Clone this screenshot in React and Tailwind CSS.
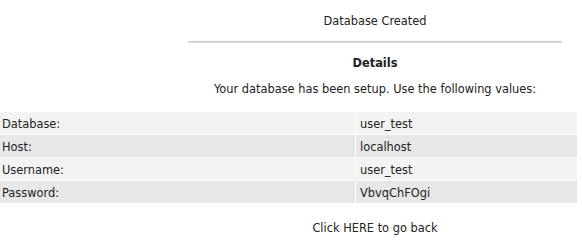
import React from 'react';

const rows = [
    { label: 'Database:', value: 'user_test' },
    { label: 'Host:', value: 'localhost' },
    { label: 'Username:', value: 'user_test' },
    { label: 'Password:', value: 'VbvqChFOgi' },
];

const App = () => {
    return (
        <div className="w-[582px] h-[242px] bg-white text-[11.4px] text-[#222] font-['Tahoma','DejaVu_Sans',sans-serif] leading-[13px]">
            <div className="ml-[188px] w-[374px] pt-[15px] text-center">
                <div className="h-[14px]">Database Created</div>
                <div className="mt-[12px] h-[2px] bg-[#c8c8c8] border-b border-[#e0e0e0]" />
                <div className="mt-[14px] font-bold">Details</div>
                <div className="mt-[13px]">Your database has been setup. Use the following values:</div>
            </div>

            <div className="mt-[16px] w-[577px] grid grid-cols-[355px_1fr] gap-px">
                {rows.map((row, i) => (
                    <React.Fragment key={i}>
                        <div className={`${i % 2 === 0 ? 'bg-[#f3f3f3]' : 'bg-[#e7e7e7]'} h-[22px] pl-[2px] pt-[6px]`}>{row.label}</div>
                        <div className={`${i % 2 === 0 ? 'bg-[#f3f3f3]' : 'bg-[#e7e7e7]'} h-[22px] pl-[4px] pt-[6px]`}>{row.value}</div>
                    </React.Fragment>
                ))}
            </div>

            <div className="ml-[188px] w-[374px] mt-[19px] text-center">Click HERE to go back</div>
        </div>
    );
};

export default App;
